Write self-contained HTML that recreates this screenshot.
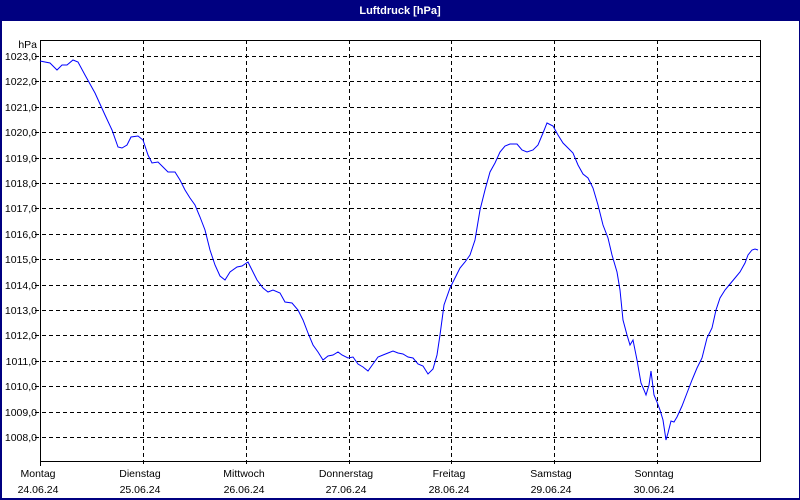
<!DOCTYPE html>
<html><head><style>
body{margin:0;width:800px;height:500px;overflow:hidden;background:#fff;font-family:"Liberation Sans",sans-serif;}
</style></head><body>
<svg width="800" height="500" xmlns="http://www.w3.org/2000/svg" font-family="Liberation Sans, sans-serif" font-size="10.5" style="display:block">
<rect x="0" y="0" width="800" height="500" fill="#000080"/>
<rect x="2" y="21" width="797" height="477" fill="#fff"/>
<text x="400" y="14" fill="#fff" font-weight="bold" text-anchor="middle" font-size="11">Luftdruck [hPa]</text>
<g stroke="#000" stroke-dasharray="4,3" stroke-width="1">
<line x1="35" y1="56.5" x2="760" y2="56.5"/>
<line x1="35" y1="81.5" x2="760" y2="81.5"/>
<line x1="35" y1="107.5" x2="760" y2="107.5"/>
<line x1="35" y1="132.5" x2="760" y2="132.5"/>
<line x1="35" y1="158.5" x2="760" y2="158.5"/>
<line x1="35" y1="183.5" x2="760" y2="183.5"/>
<line x1="35" y1="208.5" x2="760" y2="208.5"/>
<line x1="35" y1="234.5" x2="760" y2="234.5"/>
<line x1="35" y1="259.5" x2="760" y2="259.5"/>
<line x1="35" y1="285.5" x2="760" y2="285.5"/>
<line x1="35" y1="310.5" x2="760" y2="310.5"/>
<line x1="35" y1="335.5" x2="760" y2="335.5"/>
<line x1="35" y1="361.5" x2="760" y2="361.5"/>
<line x1="35" y1="386.5" x2="760" y2="386.5"/>
<line x1="35" y1="412.5" x2="760" y2="412.5"/>
<line x1="35" y1="437.5" x2="760" y2="437.5"/>
<line x1="143.5" y1="40" x2="143.5" y2="467"/>
<line x1="246.5" y1="40" x2="246.5" y2="467"/>
<line x1="349.5" y1="40" x2="349.5" y2="467"/>
<line x1="451.5" y1="40" x2="451.5" y2="467"/>
<line x1="554.5" y1="40" x2="554.5" y2="467"/>
<line x1="657.5" y1="40" x2="657.5" y2="467"/>
<line x1="40.5" y1="462" x2="40.5" y2="467"/>
</g>
<rect x="40.5" y="40.5" width="720" height="421" fill="none" stroke="#000"/>
<g text-anchor="end" fill="#000">
<text x="37" y="48">hPa</text>
<text x="37" y="60">1023,0</text>
<text x="37" y="85">1022,0</text>
<text x="37" y="111">1021,0</text>
<text x="37" y="136">1020,0</text>
<text x="37" y="162">1019,0</text>
<text x="37" y="187">1018,0</text>
<text x="37" y="212">1017,0</text>
<text x="37" y="238">1016,0</text>
<text x="37" y="263">1015,0</text>
<text x="37" y="289">1014,0</text>
<text x="37" y="314">1013,0</text>
<text x="37" y="339">1012,0</text>
<text x="37" y="365">1011,0</text>
<text x="37" y="390">1010,0</text>
<text x="37" y="416">1009,0</text>
<text x="37" y="441">1008,0</text>
</g>
<g text-anchor="middle" fill="#000">
<text x="38" y="477">Montag</text><text x="38" y="493">24.06.24</text>
<text x="140" y="477">Dienstag</text><text x="140" y="493">25.06.24</text>
<text x="244" y="477">Mittwoch</text><text x="244" y="493">26.06.24</text>
<text x="346" y="477">Donnerstag</text><text x="346" y="493">27.06.24</text>
<text x="449" y="477">Freitag</text><text x="449" y="493">28.06.24</text>
<text x="551" y="477">Samstag</text><text x="551" y="493">29.06.24</text>
<text x="654" y="477">Sonntag</text><text x="654" y="493">30.06.24</text>
</g>
<polyline fill="none" stroke="#0000ff" stroke-width="1" points="40,61 50,63 57,70 62,65 67,65 73,60 78,62 85,75 95,93 105,115 112,130 118,147 122,148 127,145 131,137 138,136 143,140 148,155 152,163 158,162 163,167 168,172 175,172 180,180 185,190 190,198 195,205 200,217 205,230 210,250 215,265 220,276 225,280 230,272 237,267 242,266 248,262 252,270 257,280 263,288 268,292 273,290 280,293 285,302 292,303 298,310 303,320 308,333 313,345 318,352 323,360 328,356 333,355 338,352 342,355 348,358 353,357 358,364 363,367 368,371 373,364 378,357 383,355 388,353 393,351 398,353 403,354 408,357 413,358 418,364 423,366 428,374 433,369 437,355 440,335 444,305 450,288 455,278 460,268 465,262 470,255 475,240 480,210 485,190 490,172 495,163 500,152 505,146 510,144 517,144 522,150 527,152 533,150 538,145 543,133 547,123 553,126 558,135 563,143 568,148 573,153 578,165 583,174 588,178 593,188 598,205 603,225 608,238 612,255 617,272 620,290 623,320 627,335 630,345 633,340 637,360 641,383 644,390 646,395 649,385 651,371 654,395 657,402 660,410 663,420 666,440 668,433 671,421 674,422 677,417 682,406 687,393 692,380 697,368 702,358 707,338 712,328 716,310 720,298 725,290 730,284 735,278 740,272 745,263 748,255 752,250 755,249 758,250"/>
</svg>
</body></html>
